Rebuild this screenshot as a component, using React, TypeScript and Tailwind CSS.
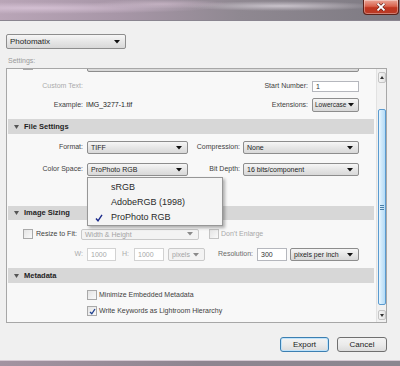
import React from "react";

const Arrow = ({ color = "#111" }: { color?: string }) => (
  <svg width="6" height="4" viewBox="0 0 6 4">
    <path d="M0 0 L6 0 L3 3.5 Z" fill={color} />
  </svg>
);

interface SelectProps {
  value: string;
  className: string;
  disabled?: boolean;
}

function Select(props: SelectProps) {
  return (
    <div
      className={
        "flex items-center justify-between rounded-[2px] border px-[3px] text-[7px] " +
        (props.disabled
          ? "border-[#c9c9c9] bg-[#f3f3f3] text-[#a4a4a4] "
          : "border-[#8d8d8d] bg-[linear-gradient(#f6f6f6,#e6e6e6_50%,#d8d8d8)] text-[#1e1e1e] ") +
        props.className
      }
    >
      <span className="whitespace-nowrap leading-none">{props.value}</span>
      <span className="mr-[2px] flex shrink-0">
        <Arrow color={props.disabled ? "#8a8a8a" : "#111"} />
      </span>
    </div>
  );
}

function Input(props: { value: string; className: string; disabled?: boolean }) {
  return (
    <div
      className={
        "flex items-center border bg-white px-[3px] text-[7px] leading-none " +
        (props.disabled ? "border-[#d2d2d2] text-[#a8a8a8] " : "border-[#b5b7bd] text-[#333] ") +
        props.className
      }
    >
      {props.value}
    </div>
  );
}

function Checkbox(props: { checked?: boolean; className?: string }) {
  return (
    <div
      className={
        "flex h-[10px] w-[10px] shrink-0 items-center justify-center border border-[#a9a9a9] bg-[linear-gradient(135deg,#e4e4e4,#fafafa)] " +
        (props.className ?? "")
      }
    >
      {props.checked && (
        <svg width="7" height="7" viewBox="0 0 7 7">
          <path d="M1 4 L2.8 5.8 L6 1" stroke="#1d3f8f" strokeWidth="1.3" fill="none" />
        </svg>
      )}
    </div>
  );
}

function SectionHeader(props: { title: string; className: string }) {
  return (
    <div
      className={
        "ml-[1px] flex w-[366px] items-center bg-[#d7d7d7] text-[7.5px] font-bold text-[#1f1f1f] " +
        props.className
      }
    >
      <svg className="ml-[6px] mr-[5px]" width="5" height="4" viewBox="0 0 5 4">
        <path d="M0 0 L5 0 L2.5 4 Z" fill="#555" />
      </svg>
      <span className="leading-none">{props.title}</span>
    </div>
  );
}

export default function App() {
  return (
    <div className="flex h-[366px] w-[400px] flex-col overflow-hidden font-[family-name:Liberation_Sans,Arial,sans-serif]">
      {/* aero glass title band */}
      <div className="flex h-[21px] shrink-0 justify-end border-b border-[#8a8590] bg-[radial-gradient(ellipse_at_8%_40%,#d3bfd2_0%,transparent_35%),radial-gradient(ellipse_at_40%_20%,#c2b0c0_0%,transparent_20%),radial-gradient(ellipse_at_70%_30%,#c9c3cb_0%,transparent_25%),linear-gradient(90deg,#b9a5b7,#a796a7_30%,#8f8891_60%,#7d7a82)]">
        <div className="mr-[1px] flex h-[15px] w-[36px] items-center justify-center rounded-b-[4px] border border-t-0 border-[#5c2219] bg-[linear-gradient(#eba697,#d9634d_45%,#c0361f_55%,#b83a26)] shadow-[inset_0_0_0_1px_rgba(255,255,255,0.35)]">
          <svg width="10" height="8" viewBox="0 0 10 8">
            <path d="M1.5 0.5 L8.5 7.5 M8.5 0.5 L1.5 7.5" stroke="#5a1a12" strokeWidth="3" />
            <path d="M1.5 0.5 L8.5 7.5 M8.5 0.5 L1.5 7.5" stroke="#fff" strokeWidth="1.8" />
          </svg>
        </div>
      </div>

      {/* dialog body */}
      <div className="flex flex-1 flex-col bg-[#f0f0f0] pl-[6px]">
        <Select value="Photomatix" className="mt-[13px] h-[15px] w-[120px] text-[8px]" />
        <div className="mt-[7px] h-[10px] pl-[2px] text-[7px] leading-[10px] text-[#9a9a9a]">Settings:</div>

        <div className="relative mt-[2px] flex h-[255px] w-[381px] border border-[#a7a7a7] bg-[#f8f8f8]">
          {/* scrolled content */}
          <div className="relative flex w-[369px] flex-col overflow-hidden text-[7px] text-[#3e3e3e]">
            <div className="-mt-[12px] flex h-[15px] items-end">
              <Checkbox className="ml-[16px] mb-[2px]" />
              <Select value="" className="ml-[54px] h-[15px] w-[272px]" />
            </div>

            <div className="mt-[8px] flex h-[12px] items-center">
              <span className="w-[76px] text-right text-[#ababab]">Custom Text:</span>
              <span className="w-[225px] text-right">Start Number:</span>
              <Input value="1" className="ml-[4px] h-[11px] w-[47px]" />
            </div>

            <div className="mt-[6px] flex h-[14px] items-center">
              <span className="w-[76px] text-right">Example:</span>
              <div className="flex w-[225px] justify-between">
                <span className="ml-[3px] text-[#222]">IMG_3277-1.tif</span>
                <span>Extensions:</span>
              </div>
              <Select value="Lowercase" className="ml-[4px] h-[14px] w-[47px] !px-[2px] !text-[6.5px]" />
            </div>

            <SectionHeader title="File Settings" className="mt-[7px] h-[15px]" />

            <div className="mt-[7px] flex h-[13px] items-center">
              <span className="w-[76px] text-right">Format:</span>
              <Select value="TIFF" className="ml-[4px] h-[13px] w-[101px]" />
              <span className="w-[52px] text-right">Compression:</span>
              <Select value="None" className="ml-[3px] h-[13px] w-[116px]" />
            </div>

            <div className="mt-[9px] flex h-[13px] items-center">
              <span className="w-[76px] text-right">Color Space:</span>
              <Select value="ProPhoto RGB" className="ml-[4px] h-[13px] w-[101px]" />
              <span className="w-[52px] text-right">Bit Depth:</span>
              <Select value="16 bits/component" className="ml-[3px] h-[13px] w-[116px]" />
            </div>

            <SectionHeader title="Image Sizing" className="mt-[30px] h-[14px]" />

            <div className="mt-[8px] flex h-[12px] items-center">
              <Checkbox className="ml-[16px]" />
              <span className="ml-[3px] w-[41px]">Resize to Fit:</span>
              <Select value="Width & Height" disabled className="ml-[4px] h-[11px] w-[118px]" />
              <Checkbox className="ml-[10px] border-[#c4c4c4]" />
              <span className="ml-[2px] text-[#a8a8a8]">Don't Enlarge</span>
            </div>

            <div className="mt-[8px] flex h-[13px] items-center">
              <span className="w-[76px] text-right text-[#ababab]">W:</span>
              <Input value="1000" disabled className="ml-[4px] h-[13px] w-[29px]" />
              <span className="ml-[6px] w-[7px] text-[#ababab]">H:</span>
              <Input value="1000" disabled className="ml-[5px] h-[13px] w-[30px]" />
              <Select value="pixels" disabled className="ml-[4px] h-[13px] w-[37px]" />
              <span className="w-[48px] text-right text-[#6a6a6a]">Resolution:</span>
              <Input value="300" className="ml-[4px] h-[13px] w-[30px] text-[#6a6a6a]" />
              <Select value="pixels per inch" className="ml-[3px] h-[13px] w-[69px]" />
            </div>

            <SectionHeader title="Metadata" className="mt-[7px] h-[15px]" />

            <div className="mt-[7px] flex h-[10px] items-center">
              <Checkbox className="ml-[80px]" />
              <span className="ml-[2px]">Minimize Embedded Metadata</span>
            </div>
            <div className="mt-[6px] flex h-[10px] items-center">
              <Checkbox checked className="ml-[80px]" />
              <span className="ml-[2px]">Write Keywords as Lightroom Hierarchy</span>
            </div>

            {/* open color space menu */}
            <div className="absolute left-[80px] top-[108px] flex h-[49px] w-[136px] flex-col border border-[#979797] bg-[#f5f5f5] pt-[2px] text-[9px] text-[#2a2a2a] shadow-[2px_2px_3px_rgba(0,0,0,0.3)]">
              <div className="flex h-[15px] items-center pl-[23px]">sRGB</div>
              <div className="flex h-[15px] items-center pl-[23px]">AdobeRGB (1998)</div>
              <div className="flex h-[15px] items-center">
                <svg className="ml-[7px] mr-[8px]" width="8" height="8" viewBox="0 0 8 8">
                  <path d="M1 4.5 L3 6.8 L7 0.8" stroke="#1a2a8a" strokeWidth="1.4" fill="none" />
                </svg>
                ProPhoto RGB
              </div>
            </div>
          </div>

          {/* scrollbar */}
          <div className="flex w-[10px] flex-col items-center border-l border-[#e2e2e2] bg-[#f1f1f1] pt-[3px]">
            <div className="flex h-[11px] w-[8px] items-center justify-center rounded-[2px] border border-[#c4c4c4] bg-[linear-gradient(90deg,#f4f4f4,#e3e3e3)]">
              <svg width="4" height="3" viewBox="0 0 4 3">
                <path d="M0 3 L4 3 L2 0 Z" fill="#333" />
              </svg>
            </div>
            <div className="mt-[26px] flex h-[196px] w-[8px] flex-col items-center justify-center gap-[1px] rounded-[2px] border border-[#5a9bd0] bg-[linear-gradient(90deg,#eaf6fe,#cbe7fa_50%,#b5dcf7)]">
              <div className="h-[1px] w-[4px] bg-[#4a7fa8]" />
              <div className="h-[1px] w-[4px] bg-[#4a7fa8]" />
              <div className="h-[1px] w-[4px] bg-[#4a7fa8]" />
            </div>
            <div className="mt-[5px] flex h-[10px] w-[8px] items-center justify-center rounded-[2px] border border-[#c4c4c4] bg-[linear-gradient(90deg,#f4f4f4,#e3e3e3)]">
              <svg width="4" height="3" viewBox="0 0 4 3">
                <path d="M0 0 L4 0 L2 3 Z" fill="#333" />
              </svg>
            </div>
          </div>
        </div>

        <div className="mt-[14px] flex justify-end gap-[8px] pr-[13px] text-[8px] text-[#1a1a1a]">
          <button className="flex h-[15px] w-[49px] items-center justify-center rounded-[3px] border border-[#3c7fb1] bg-[linear-gradient(#f3f3f3,#ebebeb_50%,#dcdcdc)] shadow-[inset_0_0_0_1px_#bfe3fb]">
            Export
          </button>
          <button className="flex h-[15px] w-[50px] items-center justify-center rounded-[3px] border border-[#707070] bg-[linear-gradient(#f3f3f3,#ebebeb_50%,#dcdcdc)]">
            Cancel
          </button>
        </div>
      </div>

      {/* window frame bottom */}
      <div className="h-[6px] shrink-0 border-t border-[#d6c9d3] bg-[linear-gradient(90deg,#a393a1,#8f8590_50%,#8b8690)]" />
    </div>
  );
}
